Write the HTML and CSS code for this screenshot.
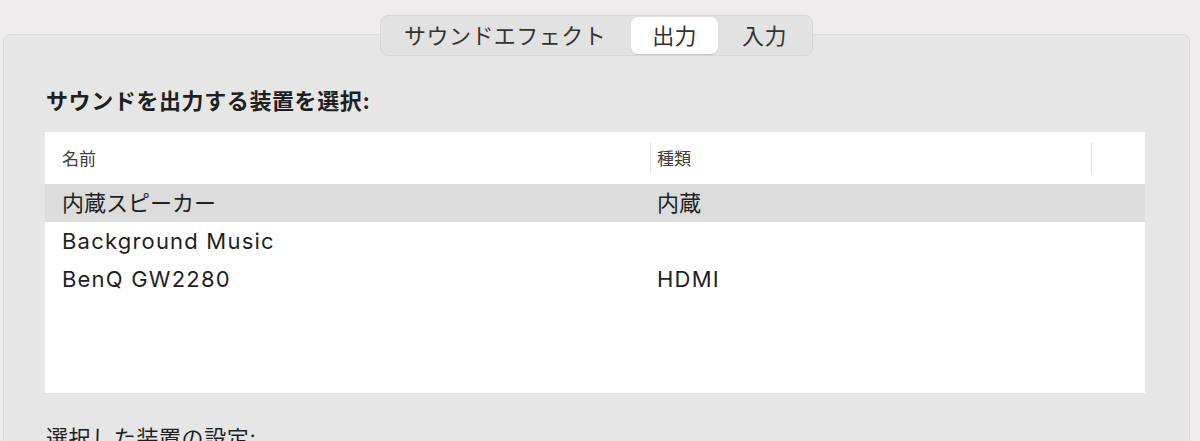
FILE: index.html
```html
<!DOCTYPE html>
<html lang="ja">
<head>
    <meta charset="UTF-8">
    <meta name="viewport" content="width=device-width, initial-scale=1.0">
    <title>サウンド</title>
    <link rel="stylesheet" href="styles.css">
</head>
<body>
    <div class="window">
        <div class="tabs">
            <div class="tab">サウンドエフェクト</div>
            <div class="tab active">出力</div>
            <div class="tab">入力</div>
        </div>

        <div class="panel">
            <h2 class="label strong">サウンドを出力する装置を選択:</h2>

            <div class="device-table">
                <div class="row head">
                    <div class="cell">名前</div>
                    <div class="cell divided">種類</div>
                    <div class="cell divided"></div>
                </div>
                <div class="row selected">
                    <div class="cell">内蔵スピーカー</div>
                    <div class="cell">内蔵</div>
                    <div class="cell"></div>
                </div>
                <div class="row">
                    <div class="cell latin">Background Music</div>
                    <div class="cell"></div>
                    <div class="cell"></div>
                </div>
                <div class="row">
                    <div class="cell latin">BenQ GW2280</div>
                    <div class="cell latin">HDMI</div>
                    <div class="cell"></div>
                </div>
            </div>

            <p class="label">選択した装置の設定:</p>
        </div>
    </div>
</body>
</html>
```

FILE: styles.css
```css
html, body {
    margin: 0;
    height: 100%;
    overflow: hidden;
}
body {
    font-family: "Inter", "Noto Sans CJK JP", sans-serif;
    background: #eeecec;
    color: #1f1f1f;
}
.window {
    padding: 15px 10px 0 3px;
}

/* segmented control */
.tabs {
    position: relative;
    z-index: 1;
    display: flex;
    width: max-content;
    height: 41px;
    box-sizing: border-box;
    margin: 0 auto;
    padding: 1px;
    background: #e3e2e2;
    border: 1px solid #d8d6d6;
    border-radius: 8px;
}
.tab {
    display: flex;
    align-items: center;
    padding: 0 24px;
    font-size: 22px;
    line-height: 22px;
    letter-spacing: 0.45px;
    color: #333;
    border-radius: 7px;
}
.tab:first-child {
    padding: 0 25px 0 22px;
}
.tab.active {
    background: #fff;
    box-shadow: 0 1px 1px rgba(0,0,0,0.12);
    padding: 0 21px;
}

/* group box */
.panel {
    margin-top: -22px;
    height: 420px;
    background: #e6e6e6;
    border: 1px solid #dbdada;
    border-radius: 7px;
    padding: 55px 44px 0 41px;
}
.label {
    margin: 0;
    font-size: 22px;
    line-height: 22px;
    font-weight: 400;
    letter-spacing: 0.6px;
    color: #1f1f1f;
    padding-left: 1px;
}
.label.strong {
    font-weight: 700;
}
.panel p.label {
    margin-top: 34px;
}

/* device list */
.device-table {
    margin-top: 20px;
    height: 261px;
    background: #fff;
}
.row {
    display: grid;
    grid-template-columns: 605px 441px 1fr;
    height: 38px;
    align-items: center;
    font-size: 22px;
    line-height: 22px;
}
.row .cell {
    padding-left: 17px;
    white-space: nowrap;
}
.row .cell + .cell {
    padding-left: 7px;
}
.row .latin {
    letter-spacing: 1.2px;
}
.row.head {
    height: 52px;
    align-items: start;
    font-size: 17px;
    line-height: 17px;
    color: #3d3d3d;
}
.row.head .cell {
    padding-top: 19px;
    height: 52px;
    box-sizing: border-box;
    position: relative;
}
.row.head .divided::before {
    content: "";
    position: absolute;
    left: 0;
    top: 11px;
    height: 30px;
    border-left: 1px solid #e2e2e2;
}
.row.selected {
    background: #dcdcdc;
}
```
